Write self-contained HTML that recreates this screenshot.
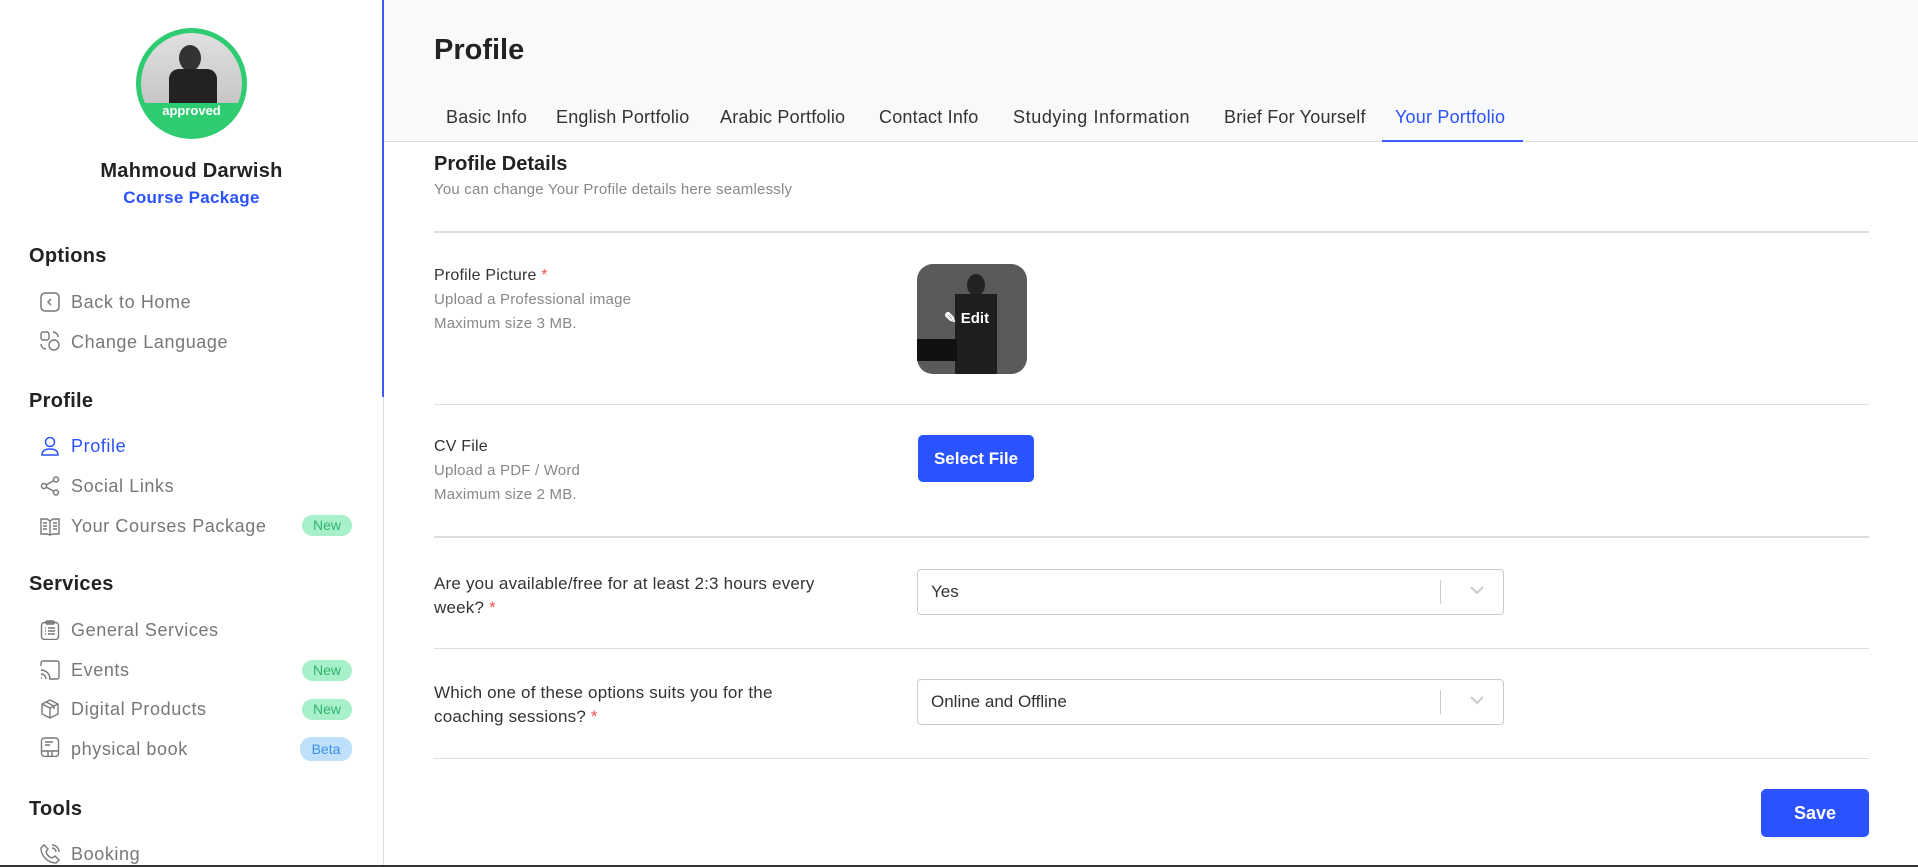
<!DOCTYPE html>
<html><head><meta charset="utf-8"><style>
*{box-sizing:border-box;margin:0;padding:0}
body{width:1918px;height:867px;overflow:hidden;background:#fff;font-family:"Liberation Sans",sans-serif;position:relative;color:#222}
.a{position:absolute;white-space:nowrap}
.side{position:absolute;left:0;top:0;width:384px;height:867px;border-right:1px solid #ddd}
.bl{position:absolute;left:382px;top:0;width:2px;height:397px;background:#3b5bfd}
.h{font-size:20px;font-weight:bold;color:#222;left:29px;letter-spacing:0.3px}
.it{font-size:18px;color:#777;left:71px;letter-spacing:0.6px}
.ic{position:absolute;left:40px;width:20px;height:20px}
.badge{position:absolute;left:302px;width:50px;height:21px;border-radius:11px;background:#a7f0c9;color:#2fb56b;font-size:14px;text-align:center;line-height:21px}
.hr{position:absolute;left:434px;width:1435px;background:#ddd}
.lab{font-size:16px;color:#333;left:434px;letter-spacing:0.2px}
.sub{font-size:15px;color:#888;left:434px;letter-spacing:0.2px}
.star{color:#e55}
.sel{position:absolute;left:917px;width:587px;height:46px;border:1px solid #ccc;border-radius:4px;font-size:17px;color:#333;padding:0 13px;line-height:44px}
.sel:after{content:"";position:absolute;right:62px;top:10px;width:1px;height:24px;background:#ccc}
.sel svg{position:absolute;right:18px;top:15px}
.tab{font-size:18px;color:#333;top:107px;letter-spacing:0.2px}
</style></head><body>
<div class="side"></div><div class="bl"></div>
<div class="a" style="left:136px;top:28px;width:111px;height:111px;border-radius:50%;background:#2ecc71"></div>
<div class="a" style="left:141px;top:33px;width:101px;height:101px;border-radius:50%;background:linear-gradient(#e0e0e0,#bbb);overflow:hidden">
<div style="position:absolute;left:38px;top:12px;width:22px;height:26px;border-radius:50%;background:#333"></div>
<div style="position:absolute;left:28px;top:36px;width:48px;height:40px;background:#222;border-radius:10px 10px 0 0"></div>
<div style="position:absolute;left:0;top:70px;width:101px;height:40px;background:#2ecc71"></div>
</div>
<div class="a" style="left:141px;top:103px;width:101px;text-align:center;color:#fff;font-size:13px;font-weight:bold">approved</div>
<div class="a" style="left:0;top:160px;width:383px;text-align:center;font-size:20px;font-weight:bold;color:#222;letter-spacing:0.3px">Mahmoud Darwish</div>
<div class="a" style="left:0;top:188px;width:383px;text-align:center;font-size:17px;font-weight:bold;color:#2a52ff;letter-spacing:0.3px">Course Package</div>

<div class="a h" style="top:245px">Options</div>
<svg class="ic" style="top:292px" viewBox="0 0 20 20" fill="none" stroke="#777" stroke-width="1.5"><rect x="1" y="1" width="18" height="18" rx="4"/><path d="M11 7l-3 3 3 3"/></svg>
<div class="a it" style="top:292px">Back to Home</div>
<svg class="ic" style="top:331px" viewBox="0 0 20 20" fill="none" stroke="#777" stroke-width="1.4"><rect x="1" y="1" width="8" height="8" rx="2"/><circle cx="14" cy="14" r="5"/><path d="M13 1a5 5 0 015 5M1 13a5 5 0 005 5"/></svg>
<div class="a it" style="top:332px">Change Language</div>

<div class="a h" style="top:390px">Profile</div>
<svg class="ic" style="top:436px" viewBox="0 0 20 20" fill="none" stroke="#2a52ff" stroke-width="1.5"><circle cx="10" cy="6" r="4.5"/><path d="M2 19c0-4 3-6 8-6s8 2 8 6z"/></svg>
<div class="a it" style="top:436px;color:#2a52ff">Profile</div>
<svg class="ic" style="top:476px" viewBox="0 0 20 20" fill="none" stroke="#777" stroke-width="1.5"><circle cx="4" cy="10" r="2.5"/><circle cx="16" cy="3.5" r="2.5"/><circle cx="16" cy="16.5" r="2.5"/><path d="M6 9l8-4.5M6 11l8 4.5"/></svg>
<div class="a it" style="top:476px">Social Links</div>
<svg class="ic" style="top:516px" viewBox="0 0 20 20" fill="none" stroke="#777" stroke-width="1.4"><path d="M1 3h6l3 2 3-2h6v15h-6l-3 1-3-1H1zM10 5v14M3 7h4M3 10h4M3 13h4M13 7h4M13 10h4M13 13h4"/></svg>
<div class="a it" style="top:516px">Your Courses Package</div>
<div class="badge" style="top:515px">New</div>

<div class="a h" style="top:573px">Services</div>
<svg class="ic" style="top:620px" viewBox="0 0 20 20" fill="none" stroke="#777" stroke-width="1.4"><rect x="1.5" y="2.5" width="17" height="17" rx="3"/><rect x="6" y="1" width="8" height="3" rx="1"/><path d="M5 8h1M8 8h7M5 11h1M8 11h7M5 14h1M8 14h7"/></svg>
<div class="a it" style="top:620px">General Services</div>
<svg class="ic" style="top:660px" viewBox="0 0 20 20" fill="none" stroke="#777" stroke-width="1.4"><path d="M1 6V3a2 2 0 012-2h14a2 2 0 012 2v14a2 2 0 01-2 2H9M1 10a9 9 0 019 9M1 14a5 5 0 015 5M1 18h1"/></svg>
<div class="a it" style="top:660px">Events</div>
<div class="badge" style="top:660px">New</div>
<svg class="ic" style="top:699px" viewBox="0 0 20 20" fill="none" stroke="#777" stroke-width="1.4"><path d="M10 1l8 4v10l-8 4-8-4V5zM2 5l8 4 8-4M10 9v10M6 3l8 4v3"/></svg>
<div class="a it" style="top:699px">Digital Products</div>
<div class="badge" style="top:699px">New</div>
<svg class="ic" style="top:737px" viewBox="0 0 20 20" fill="none" stroke="#777" stroke-width="1.4"><rect x="1.5" y="1" width="17" height="18.5" rx="3"/><path d="M5 5h8M5 8h5M1.5 14h17M8 14v5.5M12 14v5.5"/></svg>
<div class="a it" style="top:739px">physical book</div>
<div class="badge" style="top:737px;left:300px;width:52px;height:24px;line-height:24px;background:#bfe0fb;color:#3b8fe8">Beta</div>

<div class="a h" style="top:798px">Tools</div>
<svg class="ic" style="top:844px" viewBox="0 0 20 20" fill="none" stroke="#777" stroke-width="1.4"><path d="M4 1l4 4-2 3c1 3 3 5 6 6l3-2 4 4-3 3C8 19 1 12 1 4zM12 1a7 7 0 017 7M12 4a4 4 0 014 4"/></svg>
<div class="a it" style="top:844px">Booking</div>

<div class="a" style="left:384px;top:0;width:1534px;height:142px;background:#f8f9fb;border-bottom:1px solid #ddd"></div>
<div class="a" style="left:434px;top:34px;font-size:29px;font-weight:bold;color:#222">Profile</div>
<div class="a tab" style="left:446px">Basic Info</div>
<div class="a tab" style="left:556px">English Portfolio</div>
<div class="a tab" style="left:720px">Arabic Portfolio</div>
<div class="a tab" style="left:879px">Contact Info</div>
<div class="a tab" style="left:1013px;letter-spacing:0.6px">Studying Information</div>
<div class="a tab" style="left:1224px">Brief For Yourself</div>
<div class="a tab" style="left:1395px;color:#2a52ff">Your Portfolio</div>
<div class="a" style="left:1382px;top:140px;width:141px;height:2px;background:#3b5bfd"></div>

<div class="a" style="left:434px;top:153px;font-size:20px;font-weight:bold;color:#222">Profile Details</div>
<div class="a sub" style="top:181px">You can change Your Profile details here seamlessly</div>
<div class="hr" style="top:231px;height:2px"></div>

<div class="a lab" style="top:267px">Profile Picture <span class="star">*</span></div>
<div class="a sub" style="top:291px">Upload a Professional image</div>
<div class="a sub" style="top:315px">Maximum size 3 MB.</div>
<div class="a" style="left:917px;top:264px;width:110px;height:110px;border-radius:16px;background:#5a5a5a;overflow:hidden">
<div style="position:absolute;left:50px;top:10px;width:18px;height:22px;border-radius:50%;background:#222"></div>
<div style="position:absolute;left:38px;top:30px;width:42px;height:80px;background:#1e1e1e"></div>
<div style="position:absolute;left:0;top:75px;width:40px;height:22px;background:#111"></div>
</div>
<div class="a" style="left:944px;top:309px;color:#fff;font-size:15px;font-weight:bold">&#9998; Edit</div>
<div class="hr" style="top:404px;height:1px"></div>

<div class="a lab" style="top:438px">CV File</div>
<div class="a sub" style="top:462px">Upload a PDF / Word</div>
<div class="a sub" style="top:486px">Maximum size 2 MB.</div>
<div class="a" style="left:918px;top:435px;width:116px;height:47px;border-radius:5px;background:#2a52ff;color:#fff;font-size:17px;font-weight:bold;text-align:center;line-height:47px">Select File</div>
<div class="hr" style="top:536px;height:2px"></div>

<div class="a lab" style="top:572px;font-size:17px;line-height:24px">Are you available/free for at least 2:3 hours every<br>week? <span class="star">*</span></div>
<div class="sel" style="top:569px">Yes<svg width="16" height="10" viewBox="0 0 16 10" fill="none" stroke="#ccc" stroke-width="2"><path d="M2 2l6 6 6-6"/></svg></div>
<div class="hr" style="top:648px;height:1px"></div>

<div class="a lab" style="top:681px;font-size:17px;line-height:24px">Which one of these options suits you for the<br>coaching sessions? <span class="star">*</span></div>
<div class="sel" style="top:679px">Online and Offline<svg width="16" height="10" viewBox="0 0 16 10" fill="none" stroke="#ccc" stroke-width="2"><path d="M2 2l6 6 6-6"/></svg></div>
<div class="hr" style="top:758px;height:1px"></div>

<div class="a" style="left:1761px;top:789px;width:108px;height:48px;border-radius:5px;background:#2a52ff;color:#fff;font-size:18px;font-weight:bold;text-align:center;line-height:48px">Save</div>
<div class="a" style="left:0;top:865px;width:1918px;height:2px;background:#333"></div>
</body></html>
